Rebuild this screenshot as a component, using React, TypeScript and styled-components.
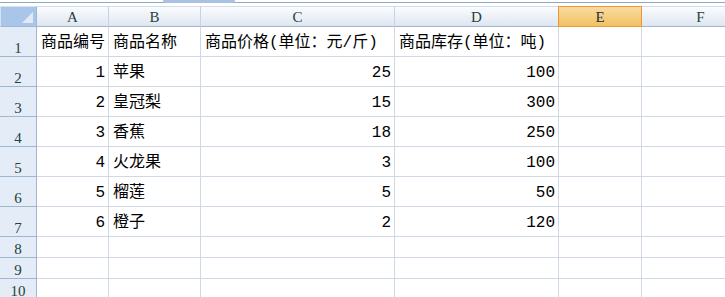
import React from "react";
import styled, { createGlobalStyle } from "styled-components";

const GlobalStyle = createGlobalStyle`
  html, body {
    margin: 0;
    padding: 0;
    background: #ffffff;
    overflow: hidden;
  }
`;

const columns = ["A", "B", "C", "D", "E", "F"];

const rows: (string | number)[][] = [
  ["商品编号", "商品名称", "商品价格(单位：元/斤)", "商品库存(单位：吨)", "", ""],
  [1, "苹果", 25, 100, "", ""],
  [2, "皇冠梨", 15, 300, "", ""],
  [3, "香蕉", 18, 250, "", ""],
  [4, "火龙果", 3, 100, "", ""],
  [5, "榴莲", 5, 50, "", ""],
  [6, "橙子", 2, 120, "", ""],
  ["", "", "", "", "", ""],
  ["", "", "", "", "", ""],
  ["", "", "", "", "", ""],
];

const Viewport = styled.div`
  width: 725px;
  height: 297px;
  overflow: hidden;
`;

const Sheet = styled.div`
  display: grid;
  width: 760px;
  grid-template-columns: 37px 72px 92px 194px 164px 83px 1fr;
  grid-template-rows: 6px 21px repeat(7, 30px) repeat(3, 21px);
`;

const TopStrip = styled.div`
  grid-column: 1 / -1;
  display: flex;
  flex-direction: column;
  background: #ffffff;
`;

const StripLine = styled.div`
  margin-top: 2px;
  height: 1px;
  background: #8fa8c8;
`;

const StripThumb = styled.div`
  margin-left: 163px;
  width: 72px;
  height: 3px;
  margin-top: -3px;
  border-radius: 0 0 3px 3px;
  background: #a9c1e3;
`;

const Corner = styled.div`
  box-sizing: border-box;
  background: #aac5ea;
  border: 1px solid #d6e2f3;
  border-right: 1px solid #9eb6ce;
  border-bottom: 1px solid #9eb6ce;
  display: flex;
  justify-content: flex-end;
  align-items: flex-end;
  padding: 0 3px 3px 0;
`;

const CornerMark = styled.div`
  width: 0;
  height: 0;
  border-left: 11px solid transparent;
  border-bottom: 11px solid #e2e9f3;
`;

const ColHeader = styled.div<{ $active?: boolean }>`
  box-sizing: border-box;
  display: flex;
  justify-content: center;
  align-items: flex-end;
  padding-bottom: 1px;
  font-family: "Liberation Serif", "DejaVu Serif", serif;
  font-size: 15px;
  line-height: 16px;
  color: ${(p) => (p.$active ? "#1f2f3f" : "#27413e")};
  background: ${(p) =>
    p.$active
      ? "linear-gradient(#f9dba1, #f1c262)"
      : "linear-gradient(#fafcfe, #dfe6f0)"};
  border-top: 1px solid ${(p) => (p.$active ? "#f29536" : "#d3dde9")};
  border-right: 1px solid ${(p) => (p.$active ? "#f29536" : "#c5d3e4")};
  border-bottom: 1px solid ${(p) => (p.$active ? "#f29536" : "#9eb6ce")};
  border-left: ${(p) => (p.$active ? "1px solid #f29536" : "none")};
  margin-left: ${(p) => (p.$active ? "-1px" : "0")};
`;

const RowHeader = styled.div`
  box-sizing: border-box;
  display: flex;
  justify-content: center;
  align-items: flex-end;
  padding-bottom: 0;
  font-family: "Liberation Serif", "DejaVu Serif", serif;
  font-size: 15px;
  line-height: 16px;
  color: #27413e;
  background: #e4ecf7;
  border-right: 1px solid #9eb6ce;
  border-bottom: 1px solid #9eb6ce;
`;

const Cell = styled.div<{ $numeric?: boolean }>`
  box-sizing: border-box;
  display: flex;
  align-items: flex-end;
  justify-content: ${(p) => (p.$numeric ? "flex-end" : "flex-start")};
  padding: 0 3px 4px 4px;
  white-space: nowrap;
  font-family: "Liberation Mono", "Noto Sans CJK SC", monospace;
  font-size: 16px;
  line-height: 18px;
  color: #000000;
  background: #ffffff;
  border-right: 1px solid #d0d7e5;
  border-bottom: 1px solid #d0d7e5;
`;

export default function App() {
  return (
    <Viewport>
      <GlobalStyle />
      <Sheet>
        <TopStrip>
          <StripLine />
          <StripThumb />
        </TopStrip>
        <Corner>
          <CornerMark />
        </Corner>
        {columns.map((c) => (
          <ColHeader key={c} $active={c === "E"}>
            {c}
          </ColHeader>
        ))}
        {rows.map((row, r) => (
          <React.Fragment key={r}>
            <RowHeader>{r + 1}</RowHeader>
            {row.map((v, c) => (
              <Cell key={c} $numeric={typeof v === "number"}>
                {v}
              </Cell>
            ))}
          </React.Fragment>
        ))}
      </Sheet>
    </Viewport>
  );
}
